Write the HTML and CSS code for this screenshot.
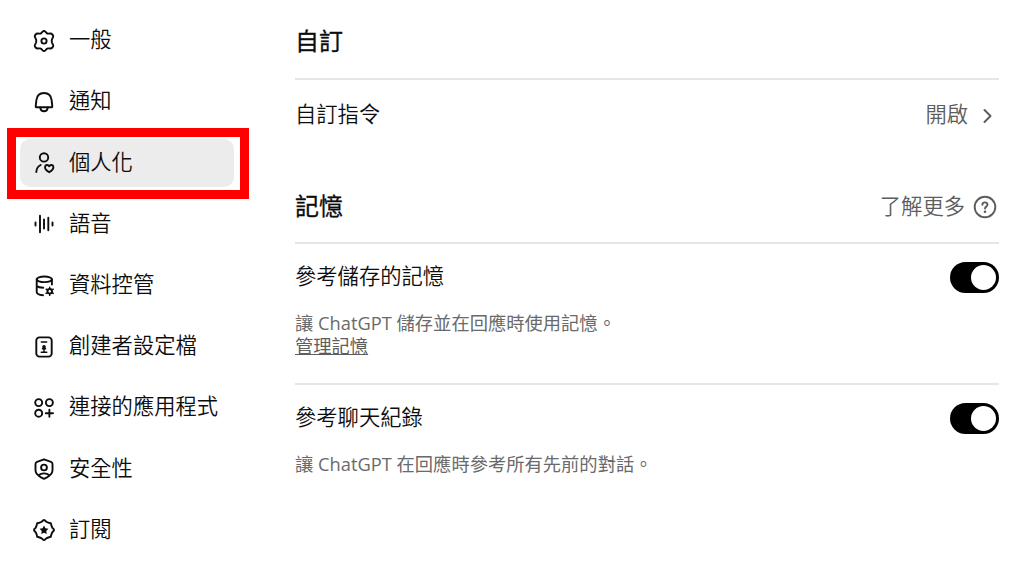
FILE: index.html
```
<!DOCTYPE html>
<html lang="zh-Hant">
<head>
    <meta charset="UTF-8">
    <meta name="viewport" content="width=device-width, initial-scale=1.0">
    <title>個人化</title>
    <link rel="stylesheet" href="styles.css">
</head>
<body>
    <div class="settings">
        <nav class="sidebar">
            <a class="nav-item">
                <svg class="icon" viewBox="0 0 24 24">
                    <path d="M10.600 2.600Q12 1.300 13.400 2.600L14.600 4Q15.300 4.700 16.400 4.600L18.400 4.500Q20.600 4.700 21.200 7.100Q21.300 8 20.600 9L19.900 10.700Q19.500 12 19.900 13.300L20.600 15Q21.300 16 21.200 16.900Q20.600 19.300 18.400 19.500L16.400 19.400Q15.300 19.300 14.600 20L13.400 21.400Q12 22.700 10.600 21.400L9.400 20Q8.700 19.300 7.600 19.400L5.600 19.500Q3.400 19.300 2.800 16.900Q2.700 16 3.400 15L4.100 13.300Q4.500 12 4.100 10.700L3.400 9Q2.700 8 2.800 7.100Q3.400 4.700 5.600 4.500L7.600 4.600Q8.700 4.700 9.400 4Z"/>
                    <circle cx="12" cy="12" r="2.600"/>
                </svg>
                <span>一般</span>
            </a>
            <a class="nav-item">
                <svg class="icon" viewBox="0 0 24 24">
                    <path d="M3.700 16.200L4.400 10C5 5.500 8 3 12 3s7 2.500 7.600 7L20.300 16.200Q20.400 17.300 19.300 17.300H4.700Q3.600 17.300 3.700 16.200Z"/>
                    <path d="M8.300 17.800C8.800 22.300 15.200 22.300 15.700 17.800"/>
                </svg>
                <span>通知</span>
            </a>
            <a class="nav-item active">
                <svg class="icon" viewBox="0 0 24 24">
                    <circle cx="12" cy="6.400" r="4.200"/>
                    <path d="M4.300 21C4.500 17.600 6 15.200 8.700 14"/>
                    <path d="M17.200 21.200C14.500 19.800 13 18.300 13 16.300C13 13.600 16 13.200 17.200 15.200C18.400 13.200 21.400 13.600 21.400 16.300C21.400 18.300 19.900 19.800 17.200 21.200Z"/>
                </svg>
                <span>個人化</span>
            </a>
            <a class="nav-item">
                <svg class="icon" viewBox="0 0 24 24">
                    <path d="M3.500 10.500v3M8 3.700v16.600M12 7.500v9M16.300 5.800v12.400M20.500 10.500v3"/>
                </svg>
                <span>語音</span>
            </a>
            <a class="nav-item">
                <svg class="icon" viewBox="0 0 24 24">
                    <ellipse cx="12.300" cy="5.300" rx="7.600" ry="2.800"/>
                    <path d="M4.700 5.300V17.800C4.700 19.900 7.500 21 11 21.200M19.900 5.300V10.500M4.700 12C6 13.100 8 13.700 11.200 13.800"/>
                    <circle cx="17.700" cy="17.300" r="2.300"/>
                    <path class="teeth" d="M17.700 13.200v2M17.700 19.400v2M14.100 15.200l1.800 1M19.500 18.400l1.800 1M14.100 19.400l1.800-1M19.500 16.200l1.800-1"/>
                </svg>
                <span>資料控管</span>
            </a>
            <a class="nav-item">
                <svg class="icon" viewBox="0 0 24 24">
                    <rect x="4.300" y="2.400" width="15.400" height="19.200" rx="3.200"/>
                    <path class="thin" d="M9.300 7h5.400M9.200 17.200h5.600M12 13v4M10.400 13.800h3.200"/>
                    <circle class="dot" cx="12" cy="11.900" r="1.800"/>
                </svg>
                <span>創建者設定檔</span>
            </a>
            <a class="nav-item">
                <svg class="icon" viewBox="0 0 24 24">
                    <circle cx="6.700" cy="6.600" r="3.500"/>
                    <circle cx="17.400" cy="6.600" r="3.500"/>
                    <circle cx="6.700" cy="17.200" r="3.500"/>
                    <path d="M17.400 13.600v7.200M13.800 17.200h7.200"/>
                </svg>
                <span>連接的應用程式</span>
            </a>
            <a class="nav-item">
                <svg class="icon" viewBox="0 0 24 24">
                    <path d="M12 2.300L19 4.800Q20.500 5.400 20.500 7V13.500C20.500 17.500 16.500 19.800 12 21.900C7.500 19.800 3.500 17.500 3.500 13.500V7Q3.500 5.400 5 4.800Z"/>
                    <circle cx="12" cy="10.500" r="2.900"/>
                    <path d="M6.800 18.500C8.500 15.600 15.500 15.600 17.200 18.500"/>
                </svg>
                <span>安全性</span>
            </a>
            <a class="nav-item">
                <svg class="icon" viewBox="0 0 24 24">
                    <path d="M12 2Q13.300 2.200 14.300 3.700Q16 4.700 18.800 5.200Q19.400 8 20.300 9.700Q21.800 10.700 22 12Q21.800 13.300 20.300 14.300Q19.400 16 18.800 18.800Q16 19.400 14.300 20.300Q13.300 21.800 12 22Q10.700 21.800 9.700 20.300Q8 19.400 5.200 18.800Q4.700 16 3.700 14.300Q2.200 13.300 2 12Q2.200 10.700 3.700 9.700Q4.700 8 5.200 5.200Q8 4.700 9.700 3.700Q10.700 2.200 12 2Z"/>
                    <path class="dot" d="M12 7.600l1.400 2.700 3 .500-2.100 2.100.400 3-2.700-1.100-2.700 1.100.400-3-2.100-2.100 3-.500z"/>
                </svg>
                <span>訂閱</span>
            </a>
        </nav>

        <main class="content">
            <div class="section-header">
                <h2>自訂</h2>
            </div>
            <div class="row">
                <span>自訂指令</span>
                <a class="row-action">
                    開啟
                    <svg class="chevron" viewBox="0 0 12 18"><path d="M2.500 3L8.500 9L2.500 15"/></svg>
                </a>
            </div>

            <div class="section-header memory-header">
                <h2>記憶</h2>
                <a class="row-action learn-more">
                    了解更多
                    <svg class="help" viewBox="0 0 24 24">
                        <circle cx="12" cy="12" r="10.300"/>
                        <path d="M9.400 9.800C9.500 6.500 14.700 6.700 14.500 9.800C14.400 11.700 12 11.600 12 13.600"/>
                        <circle class="dot" cx="12" cy="16.700" r="1.300"/>
                    </svg>
                </a>
            </div>
            <div class="option">
                <div class="option-title">
                    <span>參考儲存的記憶</span>
                    <span class="toggle"></span>
                </div>
                <p>讓 ChatGPT 儲存並在回應時使用記憶。<br><a class="link">管理記憶</a></p>
            </div>
            <div class="option">
                <div class="option-title">
                    <span>參考聊天紀錄</span>
                    <span class="toggle"></span>
                </div>
                <p>讓 ChatGPT 在回應時參考所有先前的對話。</p>
            </div>
        </main>
    </div>
</body>
</html>
```
FILE: styles.css
```
* {
    margin: 0;
    padding: 0;
    box-sizing: border-box;
}

body {
    font-family: 'Open Sans', 'Noto Sans CJK TC', sans-serif;
    font-size: 21.3px;
    font-weight: 350;
    line-height: 28px;
    background: #fff;
    color: #0d0d0d;
    overflow: hidden;
}

.settings {
    display: flex;
    gap: 61px;
    width: 1024px;
    height: 576px;
    padding: 16px 25px 0 20px;
}

.sidebar {
    display: flex;
    flex-direction: column;
    gap: 12.7px;
    width: 214px;
    padding-top: 0.5px;
}

.nav-item {
    position: relative;
    display: flex;
    align-items: center;
    gap: 13px;
    height: 48.5px;
    padding-left: 12px;
    border-radius: 10px;
    white-space: nowrap;
}

.nav-item span {
    padding-bottom: 3px;
}

.nav-item.active {
    background: #ececec;
}

/* red frame around the current item */
.nav-item.active::after {
    content: '';
    position: absolute;
    inset: -10.5px -14.5px -12px -13px;
    border: 9px solid #fe0000;
}

svg {
    fill: none;
    stroke: currentColor;
    stroke-width: 1.9;
    stroke-linecap: round;
    stroke-linejoin: round;
    flex-shrink: 0;
}

.icon {
    width: 24px;
    height: 24px;
}

.dot {
    fill: currentColor;
    stroke: none;
}

.teeth,
.thin {
    stroke-width: 1.4;
}

.content {
    flex: 1;
}

.section-header {
    display: flex;
    align-items: center;
    justify-content: space-between;
    height: 64px;
    padding-bottom: 12px;
    border-bottom: 2px solid #e6e6e6;
}

h2 {
    font-size: 24px;
    font-weight: 400;
    -webkit-text-stroke: 0.3px currentColor;
}

.row {
    display: flex;
    align-items: center;
    justify-content: space-between;
    height: 69px;
    padding-bottom: 2px;
}

.row-action {
    display: flex;
    align-items: center;
    color: #5d5d5d;
}

.chevron {
    width: 12px;
    height: 18px;
    margin: 4px 5px 0 14px;
    stroke-width: 2;
}

.memory-header {
    height: 95px;
    padding: 21px 0 0;
}

.help {
    width: 24px;
    height: 24px;
    margin: 1px 2px 0 8px;
}

.option {
    height: 141px;
    padding-top: 18px;
    border-bottom: 2px solid #e6e6e6;
}

.option:last-child {
    border-bottom: none;
}

.option-title {
    display: flex;
    align-items: flex-start;
    justify-content: space-between;
    height: 32px;
}

.option p {
    margin-top: 17px;
    font-size: 18.3px;
    font-weight: 400;
    line-height: 23px;
    color: #6a6a6a;
}

.link {
    color: #5d5d5d;
    text-decoration: underline;
}

.toggle {
    display: flex;
    align-items: center;
    justify-content: flex-end;
    width: 49px;
    height: 31px;
    padding-right: 3px;
    border-radius: 16px;
    background: #000;
}

.toggle::after {
    content: '';
    width: 25px;
    height: 25px;
    border-radius: 50%;
    background: #fff;
}
```
